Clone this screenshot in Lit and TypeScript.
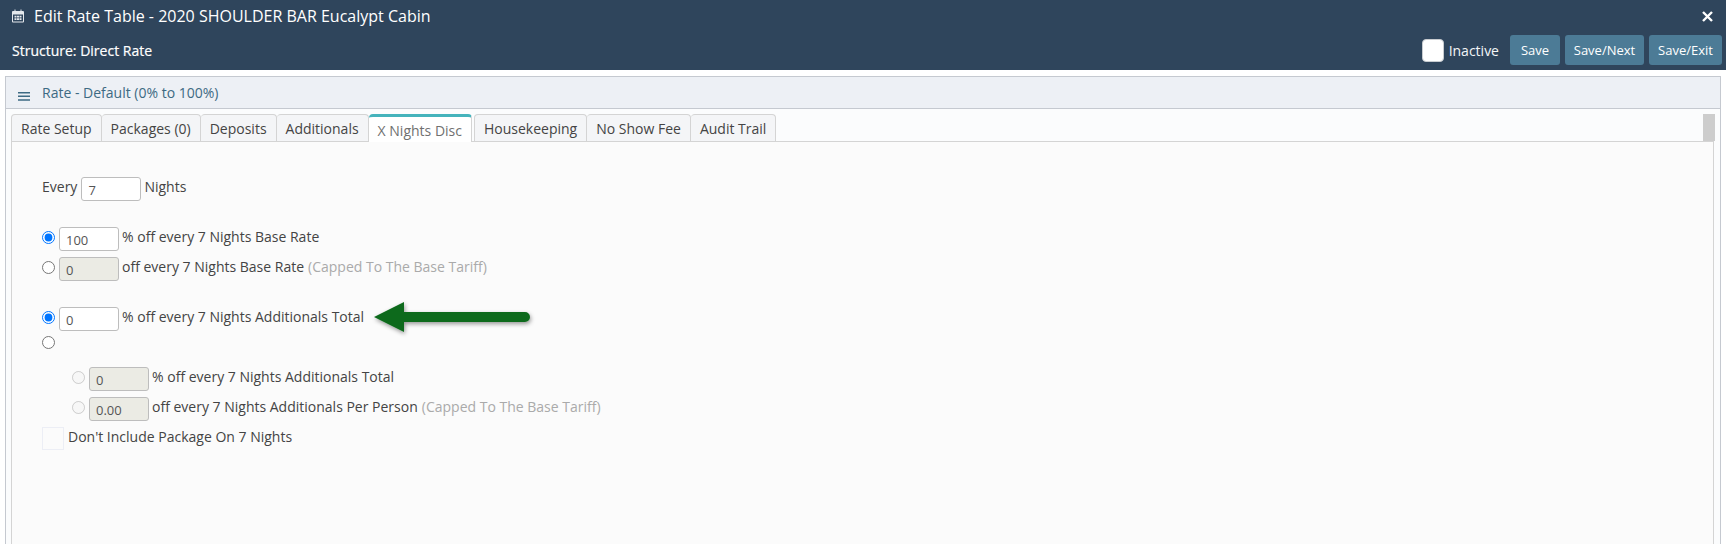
import { LitElement, html, css } from "lit";
import { customElement } from "lit/decorators.js";

@customElement("app-root")
export class AppRoot extends LitElement {
  static styles = css`
    :host { display: block; height: 544px; overflow: hidden; background: #fff; font-family: "Open Sans", sans-serif; font-size: 14px; color: #444; }
    * { box-sizing: border-box; }
    header { height: 70px; background: #2f455c; color: #fff; padding: 7px 4px 5px 12px; display: flex; flex-direction: column; justify-content: space-between; }
    .top { display: flex; align-items: center; justify-content: space-between; height: 18px; padding-right: 9px; }
    .title { display: flex; align-items: center; gap: 10px; font-size: 16px; line-height: 18px; }
    .title svg { flex: none; }
    .bottom { display: flex; align-items: center; justify-content: space-between; height: 30px; }
    .struct { font-size: 14px; font-weight: 400; -webkit-text-stroke: 0.2px #fff; }
    .actions { display: flex; align-items: center; }
    .box { width: 22px; height: 23px; background: #fff; border: 1px solid #c8ccd0; border-radius: 4px; margin-right: 5px; }
    .inactive { font-size: 14px; color: #f4f6f8; margin-right: 11px; }
    button { height: 30px; border: 0; border-radius: 3px; background: #4c7b96; color: #fff; font: 13px "Open Sans", sans-serif; padding: 0; margin-left: 5px; }
    button:first-of-type { margin-left: 0; }
    .save { width: 50px; } .next { width: 79px; } .exit { width: 73px; }
    .panel { margin: 6px 5px 0 5px; border: 1px solid #c5c9d0; border-bottom: 0; height: 480px; background: #fbfcfd; display: flex; flex-direction: column; position: relative; }
    .head { height: 32px; flex: none; background: #edf0f5; border-bottom: 1px solid #c5c9d0; display: flex; align-items: center; padding-left: 12px; gap: 12px; color: #3d6a83; font-size: 14px; }
    .head svg { margin-top: 7px; }
    .body { flex: 1; padding: 5px 6px 0 5px; display: flex; flex-direction: column; }
    .tabs { display: flex; height: 28px; flex: none; border-bottom: 1px solid #d4d4d4; }
    .tab { height: 27px; padding: 0 9px; line-height: 27px; background: #f4f5f7; border: 1px solid #d4d4d4; border-bottom: 0; border-left-width: 0; border-radius: 4px 4px 0 0; color: #444; font-size: 14px; }
    .tab:first-child { border-left-width: 1px; }
    .tab.active { height: 28px; background: #fff; border-top: 3px solid #45b3bc; border-left: 0; line-height: 27px; margin-right: 2px; color: #707070; padding: 0 9px; }
    .tab.after { border-left-width: 1px; }
    .thumb { position: absolute; top: 37px; right: 5px; width: 12px; height: 27px; background: #cdcdcd; }
    .content { flex: 1; background: #fbfbfb; border: 1px solid #d4d4d4; border-top: 0; border-bottom: 0; padding: 35px 0 0 30px; }
    .row { display: flex; align-items: flex-start; height: 30px; }
    .row.short { height: 25px; }
    .row span { line-height: 20px; margin-left: 3px; white-space: nowrap; }
    .row span.lead { margin-left: 0; margin-right: 4px; }
    .row span.muted { color: #aaa; margin-left: 4px; }
    input[type="text"] { width: 60px; height: 24px; border: 1px solid #bdbdbd; border-radius: 3px; background: #fff; font: 13px "Open Sans", sans-serif; color: #555; padding: 2px 0 0 6px; outline: 0; }
    input[type="text"]:disabled { background: #ebebe4; }
    input[type="radio"] { width: 13px; height: 13px; margin: 4px 4px 0 0; flex: none; }
    .gap-a { height: 20px; }
    .gap-b { height: 20px; }
    .gap-c { height: 5px; }
    .sub { margin-left: 30px; }
    .check { width: 22px; height: 23px; border: 1px solid #eceef5; background: #fbfbfb; margin-right: 1px; flex: none; }
    .arrow { position: absolute; left: 364px; top: 219px; }
  `;

  render() {
    return html`
      <header>
        <div class="top">
          <div class="title">
            <svg width="12" height="14" viewBox="0 0 12 14" fill="#e4e8ec"><path d="M2.5 0.5h1v1.5h5V0.5h1V2H11a1 1 0 0 1 1 1v9.5a1 1 0 0 1-1 1H1a1 1 0 0 1-1-1V3a1 1 0 0 1 1-1h1.5zM1 5.5v7h10v-7z"/><path d="M2.5 6.8h2v1.6h-2zM5 6.8h2v1.6H5zM7.5 6.8h2v1.6h-2zM2.5 9.3h2v1.6h-2zM5 9.3h2v1.6H5zM7.5 9.3h2v1.6h-2z"/></svg>
            <span>Edit Rate Table - 2020 SHOULDER BAR Eucalypt Cabin</span>
          </div>
          <svg width="11" height="11" viewBox="0 0 11 11" stroke="#fff" stroke-width="2.4"><path d="M1 1l9 9M10 1l-9 9"/></svg>
        </div>
        <div class="bottom">
          <div class="struct">Structure: Direct Rate</div>
          <div class="actions">
            <div class="box"></div>
            <span class="inactive">Inactive</span>
            <button class="save">Save</button>
            <button class="next">Save/Next</button>
            <button class="exit">Save/Exit</button>
          </div>
        </div>
      </header>
      <section class="panel">
        <div class="head">
          <svg width="12" height="9" viewBox="0 0 12 9" fill="#3d6a83"><path d="M0 0h12v1.5H0zM0 3.6h12v1.5H0zM0 7.2h12v1.5H0z"/></svg>
          <span>Rate - Default (0% to 100%)</span>
        </div>
        <div class="body">
          <nav class="tabs">
            <div class="tab">Rate Setup</div>
            <div class="tab">Packages (0)</div>
            <div class="tab">Deposits</div>
            <div class="tab">Additionals</div>
            <div class="tab active">X Nights Disc</div>
            <div class="tab after">Housekeeping</div>
            <div class="tab">No Show Fee</div>
            <div class="tab">Audit Trail</div>
          </nav>
          <div class="thumb"></div>
          <div class="content">
            <div class="row"><span class="lead">Every</span><input type="text" value="7" /><span>Nights</span></div>
            <div class="gap-a"></div>
            <div class="row"><input type="radio" name="a" checked /><input type="text" value="100" /><span>% off every 7 Nights Base Rate</span></div>
            <div class="row"><input type="radio" name="a" /><input type="text" value="0" disabled /><span>off every 7 Nights Base Rate</span><span class="muted">(Capped To The Base Tariff)</span></div>
            <div class="gap-b"></div>
            <div class="row short"><input type="radio" name="b" checked /><input type="text" value="0" /><span>% off every 7 Nights Additionals Total</span></div>
            <div class="row"><input type="radio" name="b" /></div>
            <div class="gap-c"></div>
            <div class="row sub"><input type="radio" disabled /><input type="text" value="0" disabled /><span>% off every 7 Nights Additionals Total</span></div>
            <div class="row sub"><input type="radio" disabled /><input type="text" value="0.00" disabled /><span>off every 7 Nights Additionals Per Person</span><span class="muted">(Capped To The Base Tariff)</span></div>
            <div class="row"><div class="check"></div><span>Don't Include Package On 7 Nights</span></div>
          </div>
        </div>
        <svg class="arrow" width="180" height="44" viewBox="0 0 180 44">
          <defs><filter id="s" x="-10%" y="-30%" width="120%" height="170%"><feDropShadow dx="1" dy="2" stdDeviation="2" flood-color="#000" flood-opacity=".4"/></filter></defs>
          <path filter="url(#s)" fill="#0f6b1c" d="M4 21 L34 6 V16 H155 a5 5 0 0 1 0 10 H34 V36 Z"/>
        </svg>
      </section>
    `;
  }
}
